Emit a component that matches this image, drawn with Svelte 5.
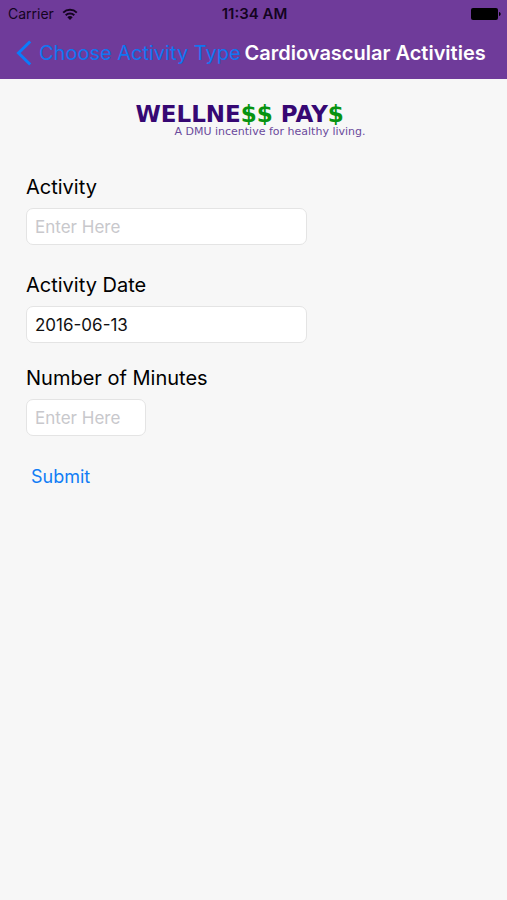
<script>
  let activity = $state('')
  let activityDate = $state('2016-06-13')
  let minutes = $state('')

  function submit(e) {
    e.preventDefault()
  }
</script>

<header>
  <div class="status-bar">
    <div class="carrier">
      <span>Carrier</span>
      <svg class="wifi" viewBox="0 0 16 12" aria-hidden="true">
        <path d="M1.2 4.600a9.800 9.800 0 0 1 13.600 0" />
        <path d="M3.700 7.300a6.200 6.200 0 0 1 8.600 0" />
        <path class="dot" d="M8 12 5.300 9.300a3.900 3.900 0 0 1 5.400 0z" />
      </svg>
    </div>
    <span class="time">11:34 AM</span>
    <svg class="battery" viewBox="0 0 30 12" aria-hidden="true">
      <rect x="0" y="0" width="27" height="12" rx="2" />
      <path d="M28 4c2.200 .6 2.200 3.400 0 4z" />
    </svg>
  </div>
  <nav>
    <a class="back" href="#activity-types">
      <svg viewBox="0 0 16 26" aria-hidden="true">
        <path d="M14.200 1.500 2.500 13l11.700 11.500" />
      </svg>
      Choose Activity Type
    </a>
    <h1>Cardiovascular Activities</h1>
  </nav>
</header>

<main>
  <div class="logo">
    <p class="brand">WELLNE<span>$$</span> PAY<span>$</span></p>
    <p class="tagline">A DMU incentive for healthy living.</p>
  </div>

  <form onsubmit={submit}>
    <div class="field">
      <label for="activity">Activity</label>
      <input id="activity" type="text" placeholder="Enter Here" bind:value={activity} />
    </div>
    <div class="details">
      <div class="field">
        <label for="date">Activity Date</label>
        <input id="date" type="text" bind:value={activityDate} />
      </div>
      <div class="field">
        <label for="minutes">Number of Minutes</label>
        <input
          id="minutes"
          class="short"
          type="text"
          inputmode="numeric"
          placeholder="Enter Here"
          bind:value={minutes}
        />
      </div>
    </div>
    <button type="submit">Submit</button>
  </form>
</main>

<style>
  :global(*, *::before, *::after) {
    box-sizing: border-box;
    margin: 0;
    padding: 0;
  }

  :global(body) {
    background: #f7f7f7;
    color: #000;
    font-family: Inter, 'Liberation Sans', sans-serif;
    min-height: 100vh;
  }

  header {
    background: #6f3b9a;
  }

  .status-bar {
    display: grid;
    grid-template-columns: 1fr auto 1fr;
    align-items: center;
    height: 27px;
    padding: 0 6px 0 8px;
    font-size: 14px;
    color: #14041f;
  }

  .carrier {
    display: flex;
    align-items: center;
    gap: 8px;
  }

  .wifi {
    width: 16px;
    height: 12px;
    fill: none;
    stroke: #14041f;
    stroke-width: 2;
  }

  .wifi .dot {
    fill: #14041f;
    stroke: none;
  }

  .time {
    font-size: 15px;
    font-weight: 600;
  }

  .battery {
    width: 30px;
    height: 12px;
    justify-self: end;
    fill: #000;
  }

  nav {
    display: flex;
    align-items: center;
    gap: 4px;
    height: 52px;
    padding: 0 16px;
    white-space: nowrap;
  }

  .back {
    display: flex;
    align-items: center;
    gap: 7px;
    color: #0f76f2;
    font-size: 20px;
    text-decoration: none;
  }

  .back svg {
    width: 16px;
    height: 26px;
    fill: none;
    stroke: #0a7cfb;
    stroke-width: 3;
  }

  h1 {
    color: #fff;
    font-size: 20px;
    font-weight: 600;
  }

  main {
    padding: 20px 26px;
  }

  .logo {
    width: fit-content;
    margin: 0 auto;
    padding: 4px 6px 0 0;
    font-family: 'DejaVu Sans', sans-serif;
  }

  .brand {
    color: #360873;
    font-size: 23px;
    font-weight: 700;
    line-height: 22px;
  }

  .brand span {
    color: #079310;
  }

  .tagline {
    padding-left: 39px;
    color: #6b4a9c;
    font-size: 11px;
    line-height: 14px;
  }

  form {
    display: flex;
    flex-direction: column;
    align-items: flex-start;
    gap: 27px;
    padding-top: 35px;
  }

  .details {
    display: flex;
    flex-direction: column;
    gap: 22px;
  }

  .field {
    display: flex;
    flex-direction: column;
    gap: 7px;
  }

  label {
    font-size: 20px;
    line-height: 27px;
  }

  input {
    width: 281px;
    max-width: 100%;
    height: 37px;
    padding: 0 8px;
    border: 1px solid #e4e4e4;
    border-radius: 7px;
    background: #fff;
    color: #111;
    font-family: inherit;
    font-size: 17px;
  }

  input.short {
    width: 120px;
  }

  input::placeholder {
    color: #c8c8cc;
    opacity: 1;
  }

  button {
    padding: 1px 5px;
    border: none;
    background: transparent;
    color: #117df5;
    font-family: inherit;
    font-size: 18px;
    line-height: 26px;
    cursor: pointer;
  }
</style>
